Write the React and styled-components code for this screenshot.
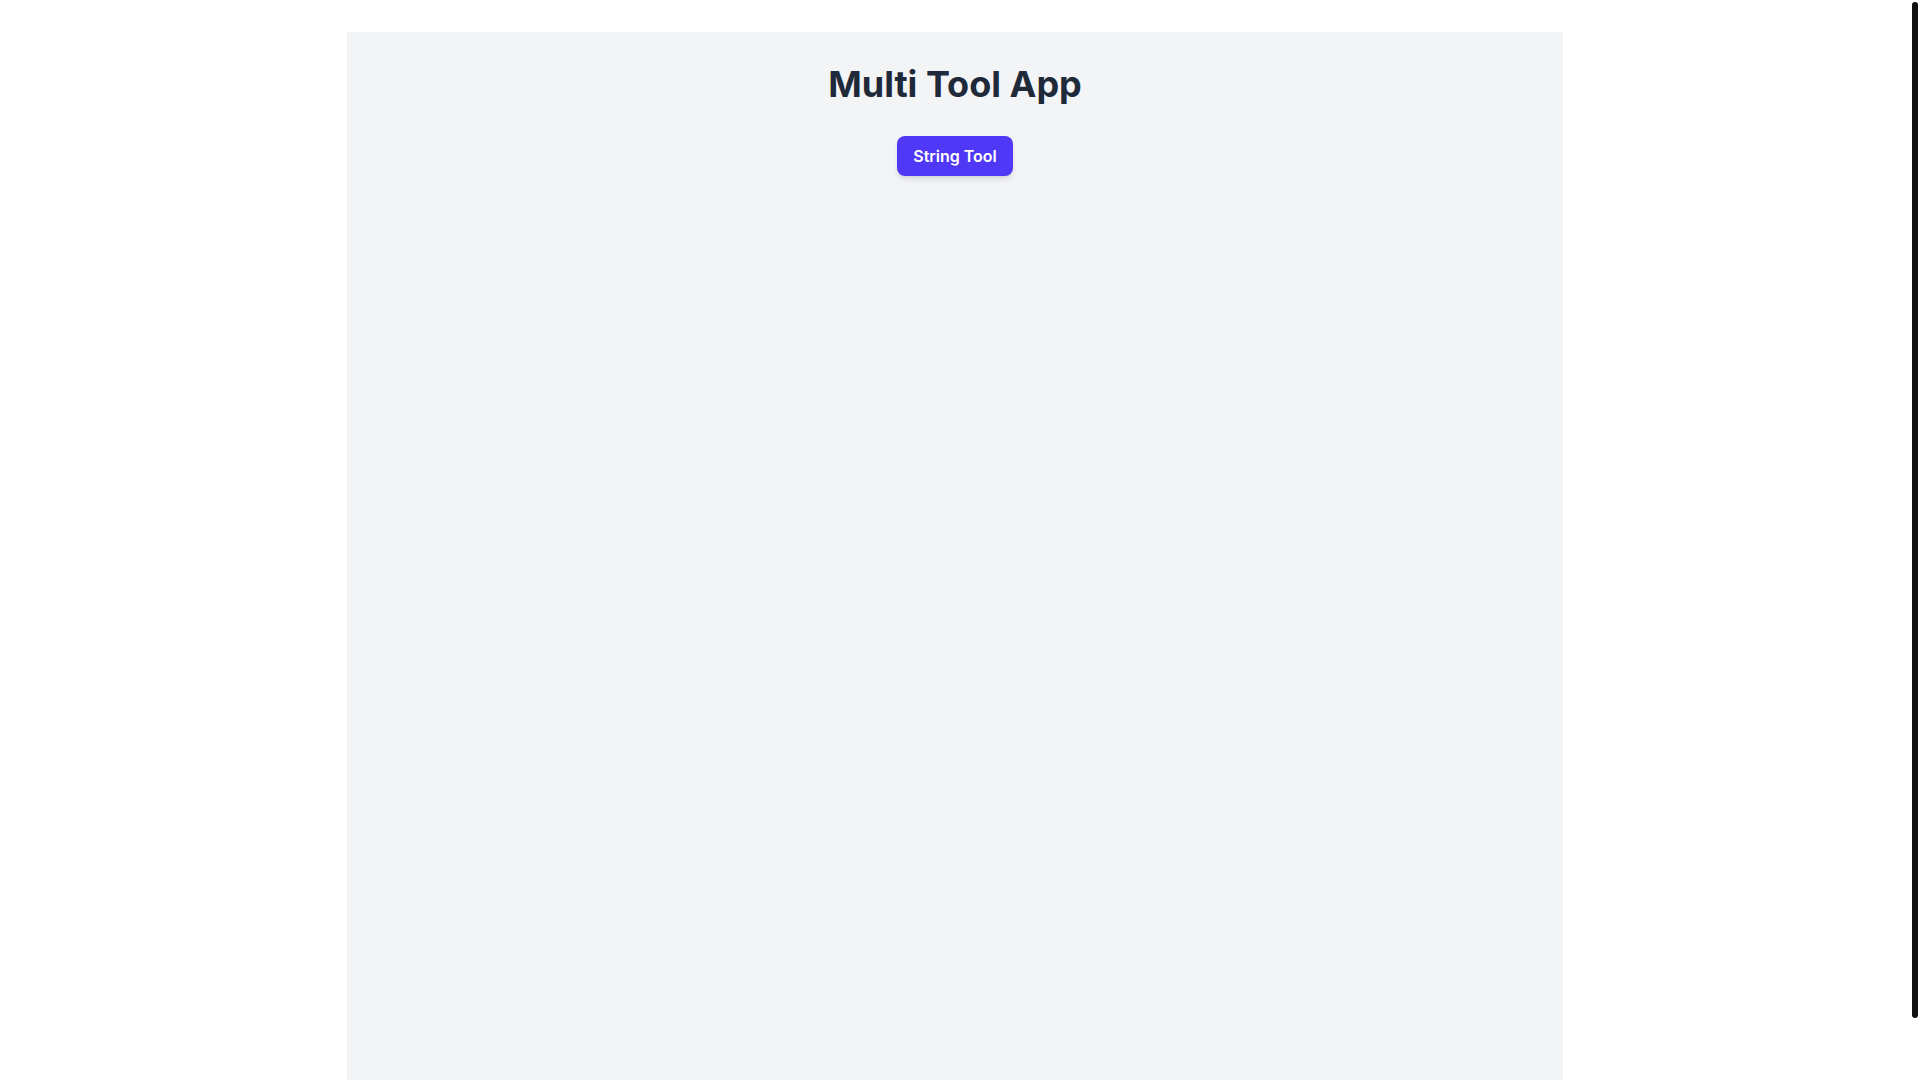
import React from 'react';
import styled, { createGlobalStyle } from 'styled-components';

const GlobalStyle = createGlobalStyle`
  html, body {
    margin: 0;
    padding: 0;
    background: #ffffff;
  }
  body {
    font-family: Inter, "Noto Sans", "Liberation Sans", sans-serif;
    padding-right: 10px;
  }
`;

// the reference shows a 10px page scrollbar; keep that gutter and its dark thumb
const ScrollThumb = styled.div`
  position: fixed;
  top: 2px;
  right: 2px;
  width: 6px;
  height: 1016px;
  border-radius: 3px;
  background: #111111;
`;

const Page = styled.div`
  max-width: 1216px;
  min-height: 100vh;
  margin: 32px auto;
  padding: 32px;
  box-sizing: border-box;
  background-color: #f3f4f6;
  display: flex;
  flex-direction: column;
  align-items: center;
`;

const Title = styled.h1`
  margin: 0 0 32px;
  font-size: 36px;
  line-height: 40px;
  font-weight: 700;
  color: #1e2939;
  text-align: center;
`;

const Nav = styled.nav`
  display: flex;
  justify-content: center;
  gap: 16px;
`;

const TabButton = styled.button`
  padding: 8px 16px;
  border: none;
  border-radius: 8px;
  background-color: ${(p) => (p.$active ? '#4f39f6' : '#e5e7eb')};
  color: ${(p) => (p.$active ? '#ffffff' : '#1e2939')};
  font-family: inherit;
  font-size: 16px;
  line-height: 24px;
  font-weight: 600;
  box-shadow: 0 4px 6px -1px rgba(0, 0, 0, 0.1), 0 2px 4px -2px rgba(0, 0, 0, 0.1);
  cursor: pointer;
`;

const App = () => {
  return (
    <>
      <GlobalStyle />
      <Page>
        <Title>Multi Tool App</Title>
        <Nav>
          <TabButton $active>String Tool</TabButton>
        </Nav>
      </Page>
      <ScrollThumb />
    </>
  );
};

export default App;
